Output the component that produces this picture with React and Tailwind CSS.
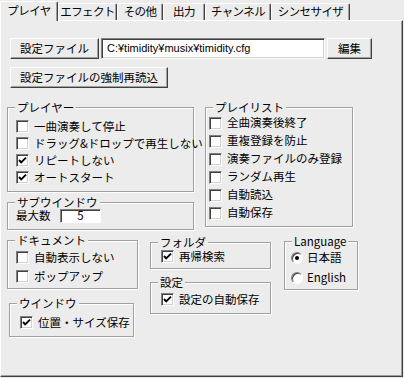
import React from "react";

// classic Win32 property page: プレイヤ tab of the TiMidity++ settings dialog

function Tab({ label, active, className = "" }) {
  return (
    <div
      className={`flex items-center justify-center whitespace-nowrap tracking-[-0.6px] bg-[#ececec] border-t border-l border-white border-r border-r-[#404040]
                  shadow-[inset_-1px_0_0_#a0a0a0] rounded-t-[2px] ${active ? "h-[20px] pb-[2px]" : "h-[17px] mb-px"} ${className}`}
    >
      {label}
    </div>
  );
}

function Btn({ children, className = "" }) {
  return (
    <button
      className={`flex items-center justify-center bg-[#ececec] border border-white border-r-[#404040] border-b-[#404040]
                  shadow-[inset_-1px_-1px_0_#a0a0a0] ${className}`}
    >
      {children}
    </button>
  );
}

function Group({ label, className = "", children }) {
  return (
    <div className={`relative border border-[#a0a0a0] shadow-[inset_1px_1px_0_#fff,1px_1px_0_#fff] ${className}`}>
      <span className="absolute -top-[7px] left-[7px] px-[2px] bg-[#ececec] leading-[12px]">{label}</span>
      {children}
    </div>
  );
}

function Check({ label, checked, className = "h-[17px]" }) {
  return (
    <div className={`flex items-center ${className}`}>
      <span
        className="w-[13px] h-[13px] shrink-0 flex items-center justify-center bg-white border border-[#808080]
                   border-r-white border-b-white shadow-[inset_1px_1px_0_#404040,inset_-1px_-1px_0_#d4d0c8]"
      >
        {checked && (
          <svg width="9" height="9" viewBox="0 0 9 9">
            <path d="M1 4 L3.2 6.4 L8 1.6" fill="none" stroke="#000" strokeWidth="1.9" />
          </svg>
        )}
      </span>
      <span className="ml-[5px] whitespace-nowrap">{label}</span>
    </div>
  );
}

function Radio({ label, checked }) {
  return (
    <div className="flex items-center h-[20px]">
      <span
        className="w-[12px] h-[12px] shrink-0 rounded-full flex items-center justify-center bg-white border border-[#808080]
                   border-r-white border-b-white shadow-[inset_1px_1px_0_#404040]"
      >
        {checked && <span className="w-[4px] h-[4px] rounded-full bg-black" />}
      </span>
      <span className="ml-[4px] whitespace-nowrap">{label}</span>
    </div>
  );
}

export default function App() {
  return (
    <div
      className="w-[404px] h-[378px] bg-[#ececec] text-black text-[11.5px] leading-none overflow-hidden"
      style={{ fontFamily: "'Noto Sans CJK JP', sans-serif" }}
    >
      {/* Tabs */}
      <div className="relative z-10 flex items-end h-[21px] -mb-px">
        <Tab label="プレイヤ" active className="w-[58px]" />
        <Tab label="エフェクト" className="w-[59px]" />
        <Tab label="その他" className="w-[46px]" />
        <Tab label="出力" className="w-[42px]" />
        <Tab label="チャンネル" className="w-[66px]" />
        <Tab label="シンセサイザ" className="w-[79px]" />
      </div>

      {/* Page */}
      <div className="w-[403px] h-[357px] border border-white border-r-[#404040] border-b-[#404040] shadow-[inset_-1px_-1px_0_#a0a0a0]">
        <div className="flex mt-[17px] ml-[9px] h-[21px]">
          <Btn className="w-[89px] h-[21px]">設定ファイル</Btn>
          <div
            className="ml-[2px] w-[224px] h-[21px] flex items-center pl-[5px] bg-white border border-[#808080] border-r-white border-b-white
                       shadow-[inset_1px_1px_0_#404040,inset_-1px_-1px_0_#d4d0c8] text-[11px]"
            style={{ fontFamily: "'Liberation Sans', sans-serif" }}
          >
            C:¥timidity¥musix¥timidity.cfg
          </div>
          <Btn className="ml-[2px] w-[45px] h-[21px]">編集</Btn>
        </div>

        <div className="mt-[8px] ml-[9px]">
          <Btn className="w-[158px] h-[21px]">設定ファイルの強制再読込</Btn>
        </div>

        <div className="flex items-start mt-[19px] ml-[6px]">
          <div className="w-[187px]">
            <Group label="プレイヤー" className="h-[85px] pt-[10px] pl-[8px]">
              <Check label="一曲演奏して停止" />
              <Check label="ドラッグ&ドロップで再生しない" />
              <Check label="リピートしない" checked />
              <Check label="オートスタート" checked />
            </Group>
            <Group label="サブウインドウ" className="mt-[10px] h-[28px] pt-[5px] pl-[8px]">
              <div className="flex items-center h-[15px]">
                <span className="w-[44px]">最大数</span>
                <div
                  className="w-[41px] h-[14px] flex items-center justify-center bg-white border border-[#808080] border-r-white border-b-white
                             shadow-[inset_1px_1px_0_#404040]"
                >
                  5
                </div>
              </div>
            </Group>
          </div>
          <div className="ml-[11px] w-[148px]">
            <Group label="プレイリスト" className="h-[120px] pt-[6px] pl-[3px]">
              <Check label="全曲演奏後終了" className="h-[18px]" />
              <Check label="重複登録を防止" className="h-[18px]" />
              <Check label="演奏ファイルのみ登録" className="h-[18px]" />
              <Check label="ランダム再生" className="h-[18px]" />
              <Check label="自動読込" className="h-[18px]" />
              <Check label="自動保存" className="h-[18px]" />
            </Group>
          </div>
        </div>

        <div className="flex items-start ml-[6px]">
          <div className="w-[131px]">
            <Group label="ドキュメント" className="mt-[10px] h-[49px] pt-[7px] pl-[8px]">
              <Check label="自動表示しない" className="h-[19px]" />
              <Check label="ポップアップ" className="h-[19px]" />
            </Group>
            <Group label="ウインドウ" className="mt-[14px] ml-[2px] w-[125px] h-[34px] pt-[10px] pl-[10px]">
              <Check label="位置・サイズ保存" checked />
            </Group>
          </div>
          <div className="ml-[12px] w-[121px]">
            <Group label="フォルダ" className="mt-[12px] h-[27px] pt-[5px] pl-[10px]">
              <Check label="再帰検索" checked />
            </Group>
            <Group label="設定" className="mt-[13px] h-[32px] pt-[8px] pl-[10px]">
              <Check label="設定の自動保存" checked />
            </Group>
          </div>
          <div className="ml-[13px] w-[74px]">
            <Group label="Language" className="mt-[11px] h-[49px] pt-[6px] pl-[6px]">
              <Radio label="日本語" checked />
              <Radio label="English" />
            </Group>
          </div>
        </div>
      </div>
    </div>
  );
}
